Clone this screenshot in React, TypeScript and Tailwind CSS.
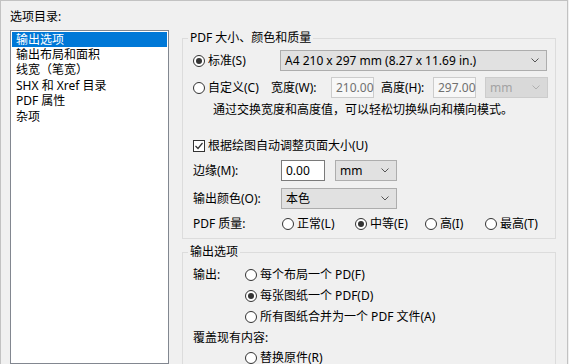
import React from "react";

function Radio({ checked }: { checked?: boolean }) {
  return (
    <span className="w-[12px] h-[12px] rounded-full border border-[#333333] bg-white flex items-center justify-center shrink-0">
      {checked && <span className="w-[6px] h-[6px] rounded-full bg-[#333333]" />}
    </span>
  );
}

function Chevron({ color = "#555555" }: { color?: string }) {
  return (
    <svg width="8" height="5" viewBox="0 0 8 5" className="shrink-0">
      <path d="M0.5 0.5 L4 4 L7.5 0.5" fill="none" stroke={color} strokeWidth="1" />
    </svg>
  );
}

function Combo({
  text,
  className,
  disabled,
}: {
  text: string;
  className: string;
  disabled?: boolean;
}) {
  return (
    <div
      className={
        "flex items-center justify-between h-[21px] pl-[4px] pr-[7px] border " +
        (disabled
          ? "bg-[#d9d9d9] border-[#cccccc] text-[#a3a3a3] "
          : "bg-[#e1e1e1] border-[#adadad] text-black ") +
        className
      }
    >
      <span className="whitespace-nowrap">{text}</span>
      <Chevron color={disabled ? "#b0b0b0" : "#555555"} />
    </div>
  );
}

function TextBox({
  text,
  className,
  disabled,
}: {
  text: string;
  className: string;
  disabled?: boolean;
}) {
  return (
    <div
      className={
        "flex items-center h-[21px] pl-[4px] border " +
        (disabled
          ? "bg-[#f7f7f7] border-[#cccccc] text-[#707070] "
          : "bg-white border-[#7a7a7a] text-black ") +
        className
      }
    >
      {text}
    </div>
  );
}

function RadioLabel({ checked, label }: { checked?: boolean; label: string }) {
  return (
    <div className="flex items-center">
      <Radio checked={checked} />
      <span className="ml-[3px] whitespace-nowrap">{label}</span>
    </div>
  );
}

export default function App() {
  return (
    <div className="w-[569px] h-[364px] overflow-hidden bg-[#f0f0f0] font-['Noto_Sans','Noto_Sans_CJK_SC',sans-serif] text-[12px] leading-[16px] text-black">
      <div className="w-[568px] h-[364px] border-t border-l border-r border-[#c2c2c2] flex">
        {/* left column */}
        <div className="ml-[9px] w-[159px] flex flex-col shrink-0">
          <div className="h-[29px] pt-[8px] leading-[16px]">选项目录:</div>
          <div className="h-[340px] border border-[#828790] bg-white p-[1px]">
            <div className="h-[15.4px] leading-[15.4px] pl-[4px] bg-[#0078d7] text-white">输出选项</div>
            <div className="h-[15.4px] leading-[15.4px] pl-[4px]">输出布局和面积</div>
            <div className="h-[15.4px] leading-[15.4px] pl-[4px]">线宽（笔宽）</div>
            <div className="h-[15.4px] leading-[15.4px] pl-[4px]">SHX 和 Xref 目录</div>
            <div className="h-[15.4px] leading-[15.4px] pl-[4px]">PDF 属性</div>
            <div className="h-[15.4px] leading-[15.4px] pl-[4px]">杂项</div>
          </div>
        </div>

        {/* right column */}
        <div className="ml-[13px] w-[374px] flex flex-col shrink-0">
          <fieldset className="border border-[#dcdcdc] mt-[29px] pb-[6px] min-w-0">
            <legend className="ml-[5px] px-[2px] h-[16px] leading-[16px]">PDF 大小、颜色和质量</legend>

            <div className="flex items-center h-[21px] mt-[4px] pl-[10px]">
              <div className="w-[87px]">
                <RadioLabel checked label="标准(S)" />
              </div>
              <Combo className="w-[267px]" text="A4 210 x 297 mm (8.27 x 11.69 in.)" />
            </div>

            <div className="flex items-center h-[21px] mt-[6px] pl-[10px]">
              <div className="w-[78px]">
                <RadioLabel label="自定义(C)" />
              </div>
              <div className="w-[60px]">宽度(W):</div>
              <TextBox disabled className="w-[43px]" text="210.00" />
              <div className="ml-[7px] w-[52px]">高度(H):</div>
              <TextBox disabled className="w-[43px]" text="297.00" />
              <Combo disabled className="ml-[9px] w-[63px]" text="mm" />
            </div>

            <div className="h-[16px] mt-[4px] pl-[30px] whitespace-nowrap">
              通过交换宽度和高度值，可以轻松切换纵向和横向模式。
            </div>

            <div className="flex items-center h-[16px] mt-[20px] pl-[10px]">
              <span className="w-[12px] h-[12px] border border-[#333333] bg-white flex items-center justify-center shrink-0">
                <svg width="10" height="10" viewBox="0 0 10 10">
                  <path d="M1.5 5 L4 7.5 L8.5 2" fill="none" stroke="#333333" strokeWidth="1.2" />
                </svg>
              </span>
              <span className="ml-[3px]">根据绘图自动调整页面大小(U)</span>
            </div>

            <div className="flex items-center h-[21px] mt-[6px] pl-[10px]">
              <div className="w-[88px]">边缘(M):</div>
              <TextBox className="w-[44px]" text="0.00" />
              <Combo className="ml-[10px] w-[62px]" text="mm" />
            </div>

            <div className="flex items-center h-[21px] mt-[7px] pl-[10px]">
              <div className="w-[88px]">输出颜色(O):</div>
              <Combo className="w-[116px]" text="本色" />
            </div>

            <div className="flex items-center h-[16px] mt-[7px] pl-[10px]">
              <div className="w-[89px]">PDF 质量:</div>
              <div className="w-[73px]">
                <RadioLabel label="正常(L)" />
              </div>
              <div className="w-[70px]">
                <RadioLabel checked label="中等(E)" />
              </div>
              <div className="w-[60px]">
                <RadioLabel label="高(I)" />
              </div>
              <RadioLabel label="最高(T)" />
            </div>
          </fieldset>

          <fieldset className="border border-[#dcdcdc] mt-[5px] pb-[20px] min-w-0">
            <legend className="ml-[5px] px-[2px] h-[16px] leading-[16px]">输出选项</legend>

            <div className="flex items-center h-[16px] mt-[7px] pl-[10px]">
              <div className="w-[52px]">输出:</div>
              <RadioLabel label="每个布局一个 PD(F)" />
            </div>
            <div className="flex items-center h-[16px] mt-[5px] pl-[62px]">
              <RadioLabel checked label="每张图纸一个 PDF(D)" />
            </div>
            <div className="flex items-center h-[16px] mt-[5px] pl-[62px]">
              <RadioLabel label="所有图纸合并为一个 PDF 文件(A)" />
            </div>
            <div className="flex items-center h-[16px] mt-[5px] pl-[10px]">覆盖现有内容:</div>
            <div className="flex items-center h-[16px] mt-[4px] pl-[62px]">
              <RadioLabel label="替换原件(R)" />
            </div>
          </fieldset>
        </div>
      </div>
    </div>
  );
}
